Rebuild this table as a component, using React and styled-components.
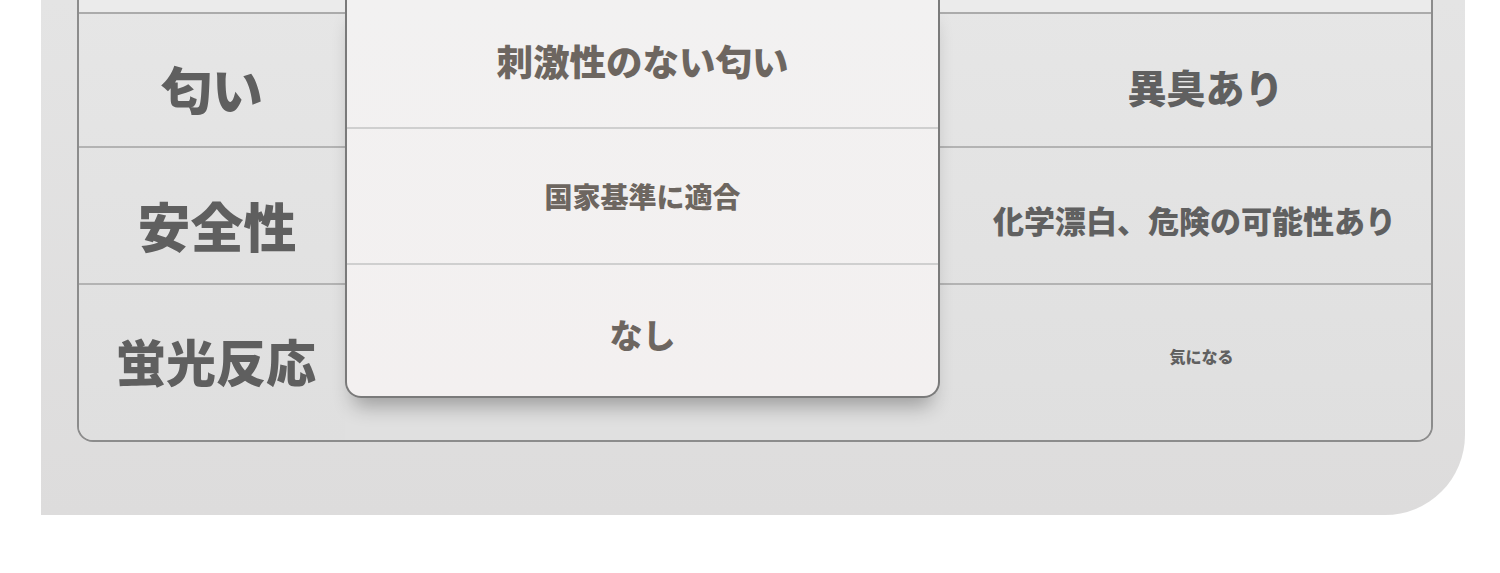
import React from 'react'
import styled, { createGlobalStyle } from 'styled-components'

const GlobalStyle = createGlobalStyle`
  html, body {
    margin: 0;
    padding: 0;
    background: #ffffff;
  }
  body {
    font-family: "Noto Sans CJK JP", "Noto Sans", sans-serif;
  }
`

const left = [
  { label: '匂い', size: 51, h: 134, pt: 16, pb: 0 },
  { label: '安全性', size: 53, h: 137, pt: 20, pb: 0, pl: 10 },
  { label: '蛍光反応', size: 50, pt: 0, pb: 6, pl: 8 },
]

const middle = [
  { text: '刺激性のない匂い', size: 36.5, h: 129, pb: 4 },
  { text: '国家基準に適合', size: 28, h: 136 },
  { text: 'なし', size: 33, pt: 8 },
]

const right = [
  { text: '異臭あり', size: 39, h: 134, pt: 12, pl: 40 },
  { text: '化学漂白、危険の可能性あり', size: 31, h: 137, pt: 8, pl: 18 },
  { text: '気になる', size: 16, pb: 14, pl: 32 },
]

export default function App() {
  return (
    <>
      <GlobalStyle />
      <Page>
        <Panel>
          <Table>
            <SideColumn>
              <Stub />
              {left.map((r) => (
                <SideRow key={r.label} $h={r.h} $pt={r.pt} $pb={r.pb} $pl={r.pl}>
                  <Label $size={r.size}>{r.label}</Label>
                </SideRow>
              ))}
            </SideColumn>

            <Card>
              {middle.map((r) => (
                <CardRow key={r.text} $h={r.h} $pt={r.pt} $pb={r.pb}>
                  <CardText $size={r.size}>{r.text}</CardText>
                </CardRow>
              ))}
            </Card>

            <SideColumn $right>
              <Stub />
              {right.map((r) => (
                <SideRow key={r.text} $h={r.h} $pt={r.pt} $pb={r.pb} $pl={r.pl}>
                  <Value $size={r.size}>{r.text}</Value>
                </SideRow>
              ))}
            </SideColumn>
          </Table>
        </Panel>
      </Page>
    </>
  )
}

const Page = styled.div`
  width: 1500px;
  height: 573px;
  padding-left: 41px;
  box-sizing: border-box;
  overflow: hidden;
`

const Panel = styled.div`
  width: 1424px;
  height: 515px;
  box-sizing: border-box;
  padding-left: 36px;
  background: linear-gradient(180deg, #e4e4e4 0%, #dddcdc 100%);
  border-bottom-right-radius: 80px;
`

const Table = styled.div`
  width: 1356px;
  height: 442px;
  box-sizing: border-box;
  display: grid;
  grid-template-columns: 266px 595px 1fr;
  align-items: start;
  border: 2px solid #8c8c8c;
  border-top: none;
  border-radius: 0 0 16px 16px;
  background: #e0e0e0;
`

const SideColumn = styled.div`
  height: 440px;
  display: flex;
  flex-direction: column;
  background: linear-gradient(180deg, #e6e6e6 0%, #dfdfdf 100%);
  border-radius: ${(p) => (p.$right ? '0 0 14px 0' : '0 0 0 14px')};
`

const Stub = styled.div`
  height: 12px;
  flex: none;
  background: #ebebeb;
  border-bottom: 2px solid #ababab;
`

const SideRow = styled.div`
  flex: ${(p) => (p.$h ? 'none' : '1')};
  height: ${(p) => (p.$h ? `${p.$h}px` : 'auto')};
  box-sizing: border-box;
  padding-top: ${(p) => p.$pt || 0}px;
  padding-bottom: ${(p) => p.$pb || 0}px;
  padding-left: ${(p) => p.$pl || 0}px;
  display: flex;
  align-items: center;
  justify-content: center;
  border-bottom: 2px solid #b3b3b3;
  &:last-child {
    border-bottom: none;
  }
`

const Label = styled.span`
  font-size: ${(p) => p.$size}px;
  font-weight: 900;
  color: #5f5f5f;
  line-height: 1;
  white-space: nowrap;
`

const Value = styled.span`
  font-size: ${(p) => p.$size}px;
  font-weight: 900;
  color: #606060;
  line-height: 1;
  white-space: nowrap;
`

const Card = styled.div`
  height: 398px;
  box-sizing: border-box;
  display: flex;
  flex-direction: column;
  background: linear-gradient(180deg, #f2f1f1 0%, #f3f0f0 100%);
  border: 2px solid #7a7a7a;
  border-top: none;
  border-radius: 0 0 16px 16px;
  box-shadow: 0 16px 20px -8px rgba(0, 0, 0, 0.3);
  position: relative;
  z-index: 1;
`

const CardRow = styled.div`
  flex: ${(p) => (p.$h ? 'none' : '1')};
  height: ${(p) => (p.$h ? `${p.$h}px` : 'auto')};
  box-sizing: border-box;
  padding-top: ${(p) => p.$pt || 0}px;
  padding-bottom: ${(p) => p.$pb || 0}px;
  display: flex;
  align-items: center;
  justify-content: center;
  border-bottom: 2px solid #cfcfcf;
  &:last-child {
    border-bottom: none;
  }
`

const CardText = styled.span`
  font-size: ${(p) => p.$size}px;
  font-weight: 900;
  color: #6d6660;
  line-height: 1;
  white-space: nowrap;
`
